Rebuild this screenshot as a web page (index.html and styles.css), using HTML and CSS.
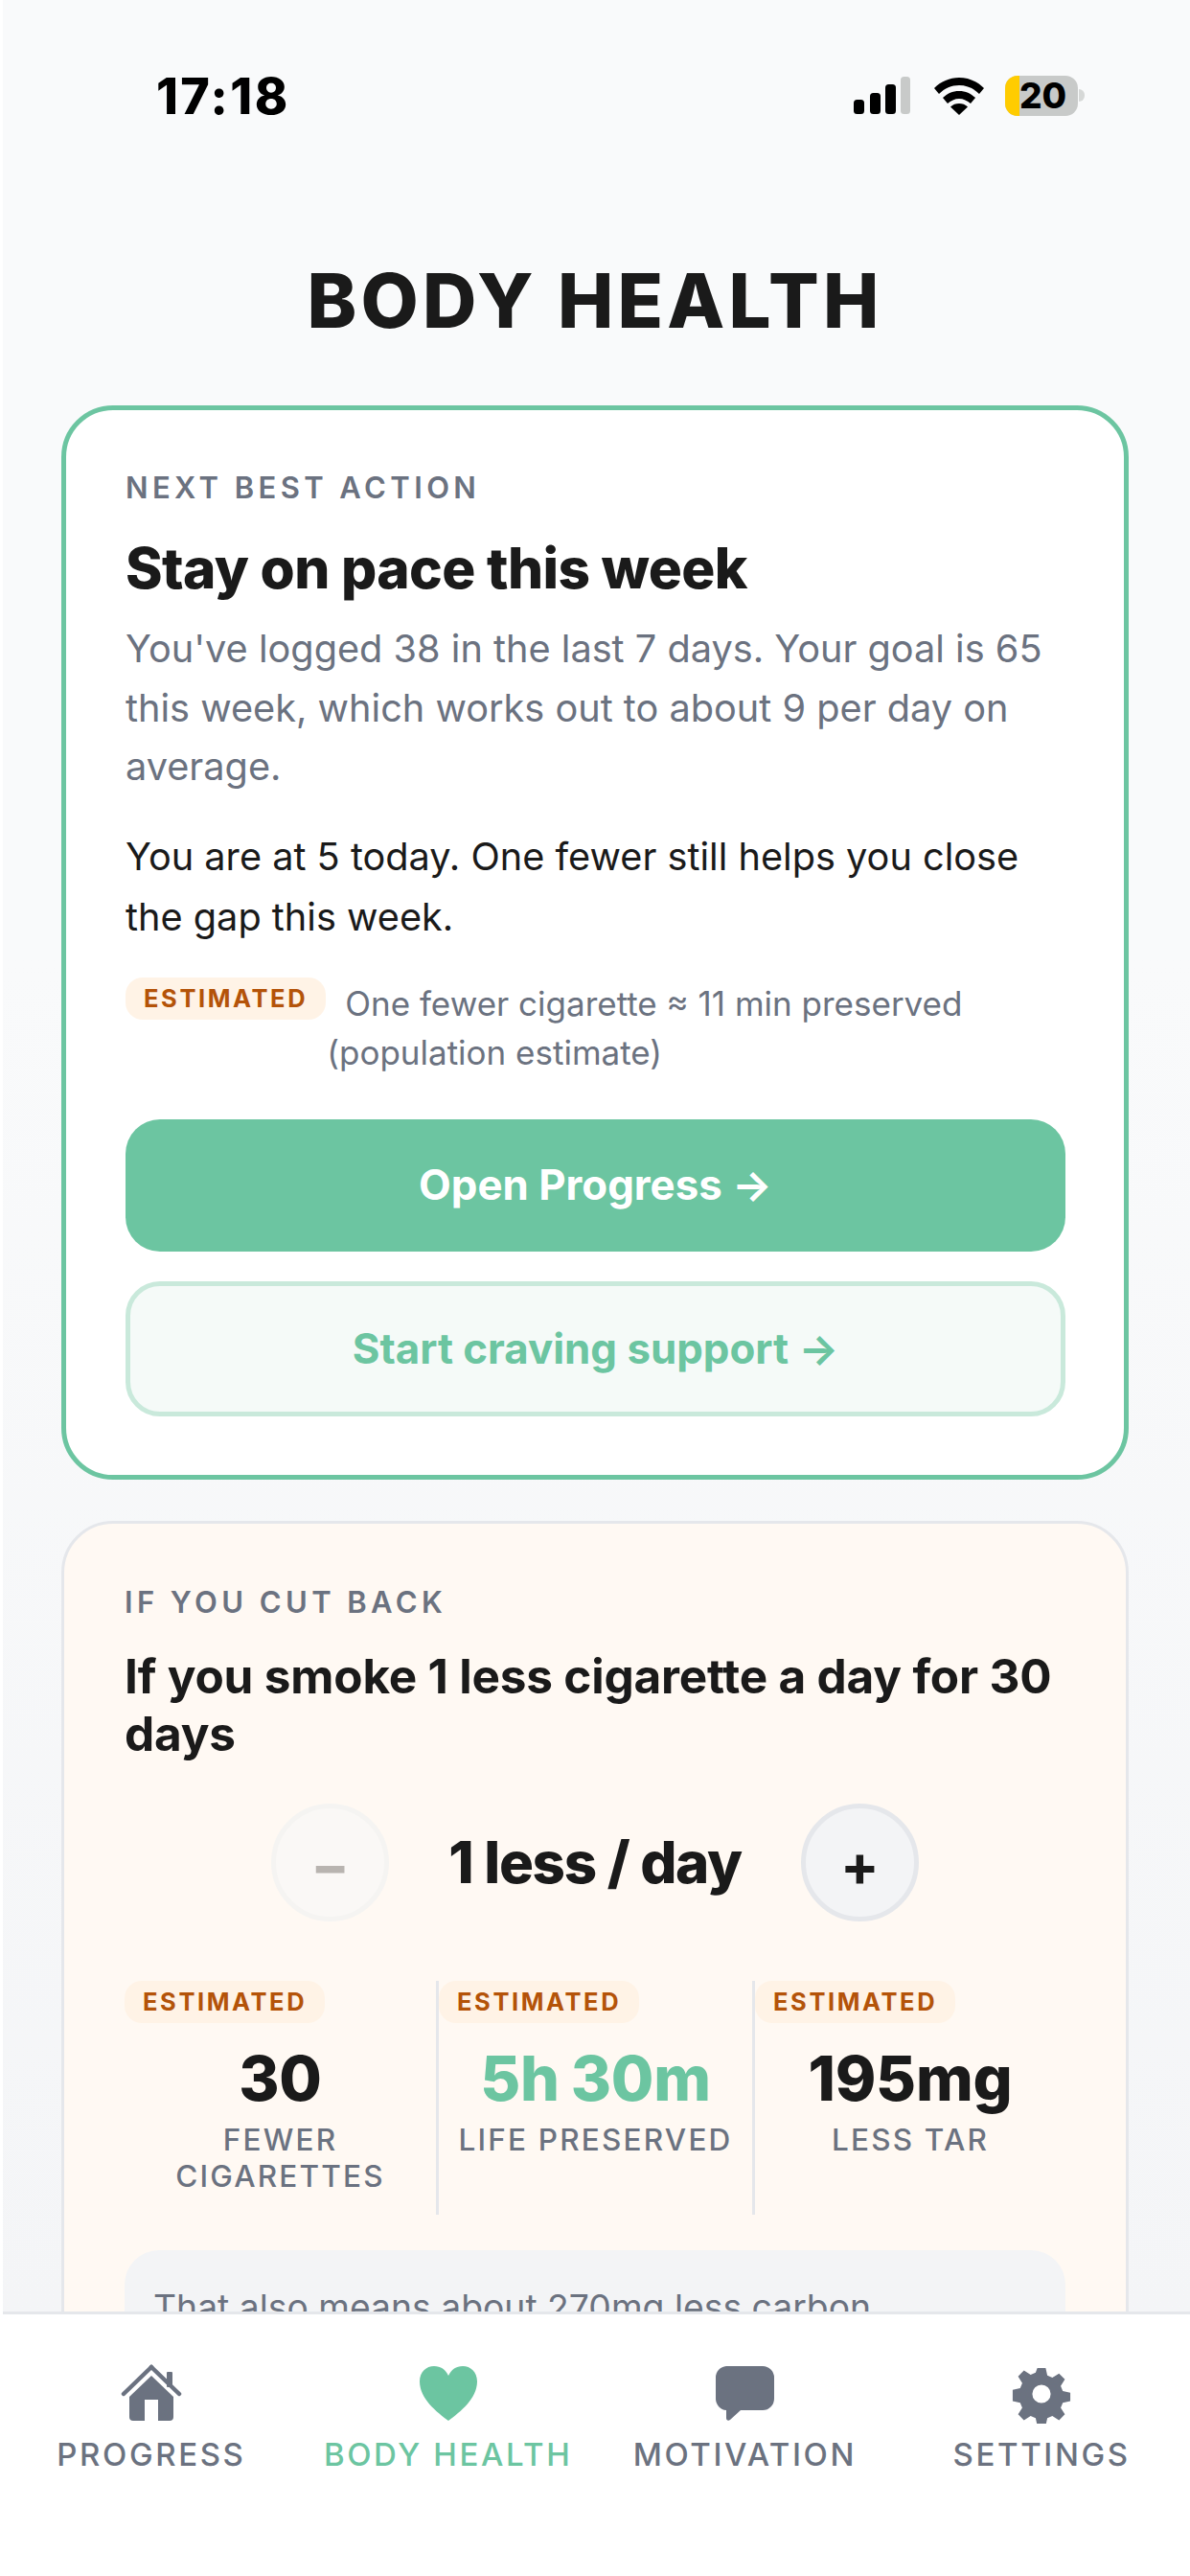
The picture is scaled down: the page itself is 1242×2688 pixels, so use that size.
FILE: index.html
```html
<!DOCTYPE html>
<html lang="en">
<head>
<meta charset="utf-8">
<title>Body Health</title>
<link rel="stylesheet" href="styles.css">
</head>
<body>
<div class="app">
  <main class="screen">
    <div class="status">
      <span class="time">17:18</span>
      <div class="status-icons">
        <svg class="signal" width="60" height="42" viewBox="0 0 60 42">
          <rect x="0" y="24" width="11" height="15" rx="3.5" fill="#000"/>
          <rect x="17" y="17" width="11" height="22" rx="3.5" fill="#000"/>
          <rect x="33" y="8" width="11" height="31" rx="3.5" fill="#000"/>
          <rect x="49" y="0" width="10" height="39" rx="3.5" fill="#c8cac9"/>
        </svg>
        <svg class="wifi" width="52" height="40" viewBox="0 0 52 40">
          <path d="M26 0C16 0 7 4 0 11l5 6C11 11 18 8 26 8s15 3 21 9l5-6C45 4 36 0 26 0z" fill="#000"/>
          <path d="M26 14c-7 0-12 2.500-17 7l5 6c3.500-3 7.500-5 12-5s8.500 2 12 5l5-6c-5-4.500-10-7-17-7z" fill="#000"/>
          <path d="M26 27c-3.500 0-6.500 1-9 3.500L26 39l9-8.500c-2.500-2.500-5.500-3.500-9-3.500z" fill="#000"/>
        </svg>
        <div class="battery">
          <span class="battery-fill"></span>
          <span class="battery-num">20</span>
        </div>
        <span class="battery-nub"></span>
      </div>
    </div>

    <h1 class="page-title">BODY HEALTH</h1>

    <section class="card card-action">
      <div class="eyebrow">NEXT BEST ACTION</div>
      <h2 class="action-title">Stay on pace this week</h2>
      <p class="muted">You've logged 38 in the last 7 days. Your goal is 65 this week, which works out to about 9 per day on average.</p>
      <p class="body-text">You are at 5 today. One fewer still helps you close the gap this week.</p>
      <div class="estimate-row">
        <span class="badge">ESTIMATED</span>
        <span class="estimate-text">One fewer cigarette ≈ 11 min preserved (population estimate)</span>
      </div>
      <div class="btn btn-primary">Open Progress →</div>
      <div class="btn btn-secondary">Start craving support →</div>
    </section>

    <section class="card card-cut">
      <div class="eyebrow">IF YOU CUT BACK</div>
      <h2 class="cut-title">If you smoke 1 less cigarette a day for 30 days</h2>
      <div class="stepper">
        <div class="step step-off">−</div>
        <div class="step-value">1 less / day</div>
        <div class="step">+</div>
      </div>
      <div class="stats">
        <div class="stat">
          <span class="badge">ESTIMATED</span>
          <div class="stat-num">30</div>
          <div class="stat-label">FEWER CIGARETTES</div>
        </div>
        <div class="stat stat-div">
          <span class="badge">ESTIMATED</span>
          <div class="stat-num stat-green">5h 30m</div>
          <div class="stat-label">LIFE PRESERVED</div>
        </div>
        <div class="stat stat-div">
          <span class="badge">ESTIMATED</span>
          <div class="stat-num">195mg</div>
          <div class="stat-label">LESS TAR</div>
        </div>
      </div>
      <div class="info-box">That also means about 270mg less carbon monoxide in your body.</div>
    </section>
  </main>

  <nav class="tabbar">
    <div class="tab">
      <svg class="tab-icon" width="64" height="62" viewBox="0 0 64 62">
        <path d="M32 3 3 31" stroke="#6b7280" stroke-width="4.500" stroke-linecap="round" fill="none"/>
        <path d="M32 3 61 31" stroke="#6b7280" stroke-width="4.500" stroke-linecap="round" fill="none"/>
        <rect x="48" y="8" width="6" height="16" rx="1" fill="#6b7280"/>
        <path d="M32 12 55 34V55a4 4 0 0 1-4 4H13a4 4 0 0 1-4-4V34z" fill="#6b7280"/>
        <rect x="25" y="37" width="14" height="22" fill="#fff"/>
      </svg>
      <span class="tab-label">PROGRESS</span>
    </div>
    <div class="tab tab-active">
      <svg class="tab-icon" width="64" height="62" viewBox="0 0 64 62">
        <path d="M32 59C20 50 2 36 2 18 2 8 9 2 17 2c7 0 12 3.500 15 10 3-6.500 8-10 15-10 8 0 15 6 15 16 0 18-18 32-30 41z" fill="#6cc5a1"/>
      </svg>
      <span class="tab-label">BODY HEALTH</span>
    </div>
    <div class="tab">
      <svg class="tab-icon" width="64" height="62" viewBox="0 0 64 62">
        <path d="M13 2H51a12 12 0 0 1 12 12V36a12 12 0 0 1-12 12H28L17 58c-2 1.500-4 .5-4-2V48a12 12 0 0 1-11-12V14A12 12 0 0 1 13 2z" fill="#6b7280"/>
      </svg>
      <span class="tab-label">MOTIVATION</span>
    </div>
    <div class="tab">
      <svg class="tab-icon" width="64" height="62" viewBox="0 0 64 64">
        <path fill-rule="evenodd" fill="#6b7280" d="M27 1h10l2 9 6 2.500 8-5 7 7-5 8 2.500 6 9 2v10l-9 2-2.500 6 5 8-7 7-8-5-6 2.500-2 9H27l-2-9-6-2.500-8 5-7-7 5-8-2.500-6-9-2V27l9-2 2.500-6-5-8 7-7 8 5 6-2.500zM32 21a11 11 0 1 0 0 22 11 11 0 0 0 0-22z" transform="translate(3.200 3.200) scale(.9)"/>
      </svg>
      <span class="tab-label">SETTINGS</span>
    </div>
  </nav>
</div>
</body>
</html>
```

FILE: styles.css
```css
* { box-sizing: border-box; }
html, body { margin: 0; padding: 0; }
body {
  width: 1242px;
  height: 2688px;
  overflow: hidden;
  background: #fff;
  font-family: Inter, "Liberation Sans", sans-serif;
  color: #1a1a1a;
}
.app {
  height: 2688px;
  display: flex;
  flex-direction: column;
  padding-left: 3px;
}
.screen {
  flex: 1;
  min-height: 0;
  overflow: hidden;
  background: linear-gradient(#f9fafb 0, #f9fafb 1000px, #f4f5f7 100%);
  padding: 0 64px 0 61px;
}
.status {
  height: 200px;
  margin: 0 -64px 0 -61px;
  padding: 70px 0 0 160px;
  display: flex;
  justify-content: space-between;
  align-items: flex-start;
}
.time {
  font-size: 52px;
  line-height: 62px;
  font-weight: 800;
  color: #000;
  letter-spacing: 2.400px;
}
.status-icons {
  display: flex;
  align-items: flex-start;
  padding: 9px 117px 0 0;
  position: relative;
}
.signal { margin: 1px 24px 0 0; }
.wifi { margin: 2px 22px 0 0; }
.battery {
  position: relative;
  width: 76px;
  height: 42px;
  margin-top: 0;
  background: #c8cac9;
  border-radius: 13px;
  overflow: hidden;
  display: flex;
  align-items: center;
}
.battery-fill { width: 15px; height: 42px; background: #ffcc00; flex: none; }
.battery-num {
  font-size: 37px;
  line-height: 42px;
  font-weight: 800;
  color: #000;
}
.battery-nub {
  position: absolute;
  right: 110px;
  top: 23px;
  width: 6px;
  height: 13px;
  background: #d6d8d7;
  border-radius: 0 6px 6px 0;
}
.page-title {
  margin: 0;
  height: 223px;
  padding-top: 69px;
  text-align: center;
  font-size: 78px;
  line-height: 90px;
  font-weight: 800;
  letter-spacing: 4.200px;
}
.card {
  border-radius: 54px;
}
.card-action {
  background: #fff;
  border: 5px solid #6cc5a1;
  padding: 63px 61px 61px 62px;
  margin-bottom: 43px;
}
.card-cut {
  background: #fff9f3;
  border: 3px solid #e5e7eb;
  padding: 64px 63px 60px;
}
.eyebrow {
  font-size: 31px;
  line-height: 36px;
  font-weight: 600;
  letter-spacing: 4.400px;
  color: #6b7280;
}
.action-title {
  margin: 31px 0 0;
  font-size: 58.500px;
  line-height: 70px;
  font-weight: 800;
  letter-spacing: -0.6px;
}
.muted {
  margin: 19px 0 0;
  font-size: 39.700px;
  line-height: 61.500px;
  color: #6b7280;
}
.body-text {
  margin: 31px 0 0;
  font-size: 39.700px;
  line-height: 63px;
  color: #1a1a1a;
}
.estimate-row {
  display: flex;
  align-items: flex-start;
  gap: 1px;
  margin-top: 31px;
}
.badge {
  display: inline-block;
  flex: none;
  height: 44px;
  padding: 0 19px;
  border-radius: 18px;
  background: #fff3e6;
  color: #b45309;
  font-size: 25.500px;
  line-height: 44px;
  font-weight: 700;
  letter-spacing: 2.600px;
}
.estimate-text {
  padding-top: 2px;
  font-size: 35px;
  line-height: 51px;
  color: #6b7280;
  text-indent: 19px;
}
.btn {
  height: 138px;
  border-radius: 36px;
  display: flex;
  align-items: center;
  justify-content: center;
  font-size: 43.800px;
  font-weight: 700;
}
.btn-primary {
  margin-top: 44px;
  background: #6cc5a1;
  color: #fff;
}
.btn-secondary {
  margin-top: 31px;
  height: 141px;
  background: #f5faf8;
  border: 5px solid #c9e9db;
  color: #6cc5a1;
}
.cut-title {
  margin: 29px 0 0;
  font-size: 49.500px;
  line-height: 60px;
  font-weight: 700;
  letter-spacing: -0.2px;
}
.stepper {
  display: flex;
  align-items: center;
  justify-content: center;
  gap: 62px;
  margin-top: 43px;
}
.step {
  width: 123px;
  height: 123px;
  border-radius: 50%;
  background: #f3f4f6;
  border: 5px solid #e5e7eb;
  display: flex;
  align-items: center;
  justify-content: center;
  padding-top: 6px;
  font-size: 60px;
  font-weight: 700;
  color: #1a1a1a;
  flex: none;
}
.step-off { background: #faf8f6; border-color: #f5f4f2; color: #b8b4b0; }
.step-value {
  font-size: 60px;
  line-height: 70px;
  font-weight: 800;
  letter-spacing: -1.300px;
}
.stats {
  display: grid;
  grid-template-columns: 325fr 330fr 327fr;
  height: 244px;
  margin-top: 62px;
}
.stat {
  display: flex;
  flex-direction: column;
  align-items: center;
  min-width: 0;
}
.stat .badge { align-self: flex-start; }
.stat-div { border-left: 3px solid #e5e7eb; }
.stat-num {
  margin-top: 19px;
  font-size: 64.500px;
  line-height: 78px;
  font-weight: 800;
  letter-spacing: -0.200px;
}
.stat-green { color: #6cc5a1; word-spacing: -2px; }
.stat-label {
  margin-top: 6px;
  font-size: 31.500px;
  line-height: 38px;
  font-weight: 500;
  letter-spacing: 2.200px;
  text-align: center;
  color: #6b7280;
}
.info-box {
  margin-top: 37px;
  padding: 30px 30px;
  background: #f3f4f6;
  border-radius: 36px;
  font-size: 37.300px;
  line-height: 60px;
  color: #6b7280;
}
.tabbar {
  flex: none;
  height: 276px;
  background: #fff;
  border-top: 3px solid #e5e7eb;
  display: grid;
  grid-template-columns: repeat(4, 1fr);
  padding-top: 52px;
}
.tab {
  display: flex;
  flex-direction: column;
  align-items: center;
  color: #6b7280;
}
.tab-active { color: #6cc5a1; }
.tab-icon { display: block; height: 62px; }
.tab-label {
  margin-top: 12px;
  font-size: 33px;
  line-height: 40px;
  font-weight: 500;
  letter-spacing: 2.600px;
}
```
